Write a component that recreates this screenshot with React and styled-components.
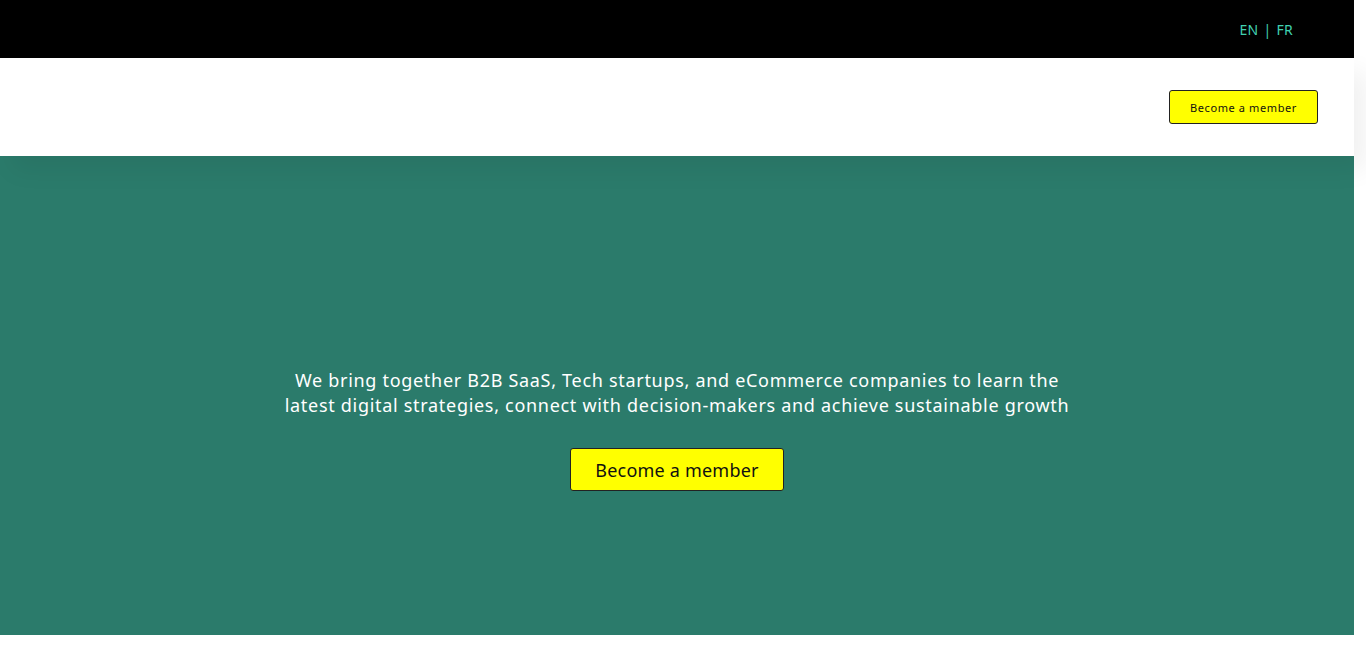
import React from "react";
import styled, { createGlobalStyle } from "styled-components";

const Global = createGlobalStyle`
  html, body { margin: 0; padding: 0; background: #fff; }
  body { font-family: "Noto Sans", "Open Sans", sans-serif; overflow-x: hidden; }
  * { box-sizing: border-box; }
`;

const Page = styled.div`
  width: 1354px;
  display: flex;
  flex-direction: column;
`;

const TopBar = styled.div`
  height: 58px;
  background: #000;
  display: flex;
  align-items: center;
  justify-content: flex-end;
  padding: 0 61px 0 0;
`;

const Lang = styled.div`
  color: #40d0b0;
  font-size: 14px;
  letter-spacing: 0.3px;
  display: flex;
  gap: 5px;
`;

const Header = styled.header`
  height: 98px;
  background: #fff;
  display: flex;
  align-items: center;
  justify-content: flex-end;
  padding: 0 36px 0 0;
  position: relative;
  z-index: 2;
  box-shadow: 12px 14px 24px rgba(0, 0, 0, 0.06);
`;

const Button = styled.button`
  background: #ffff00;
  color: #111;
  border: 1px solid #222;
  border-radius: 3px;
  font-family: "Noto Sans", sans-serif;
  cursor: pointer;
  font-size: ${(p) => (p.$big ? "18px" : "11px")};
  letter-spacing: ${(p) => (p.$big ? "0.2px" : "0.6px")};
  height: ${(p) => (p.$big ? "43px" : "34px")};
  padding: ${(p) => (p.$big ? "0 24px" : "0 20px")};
  display: flex;
  align-items: center;
  justify-content: center;
`;

const Hero = styled.section`
  height: 479px;
  background: #2b7b6b;
  display: flex;
  flex-direction: column;
  align-items: center;
  justify-content: flex-start;
  padding-top: 212px;
  gap: 30px;
`;

const Lead = styled.p`
  margin: 0;
  color: #fff;
  font-size: 18px;
  line-height: 25px;
  text-align: center;
  letter-spacing: 0.7px;
  max-width: 820px;
`;

const Footer = styled.div`
  height: 16px;
  background: #fff;
`;

export default function App() {
  return (
    <>
      <Global />
      <Page>
        <TopBar>
          <Lang>
            <span>EN</span>
            <span>|</span>
            <span>FR</span>
          </Lang>
        </TopBar>
        <Header>
          <Button>Become a member</Button>
        </Header>
        <Hero>
          <Lead>
            We bring together B2B SaaS, Tech startups, and eCommerce companies to learn the
            <br />
            latest digital strategies, connect with decision-makers and achieve sustainable growth
          </Lead>
          <Button $big>Become a member</Button>
        </Hero>
        <Footer />
      </Page>
    </>
  );
}
